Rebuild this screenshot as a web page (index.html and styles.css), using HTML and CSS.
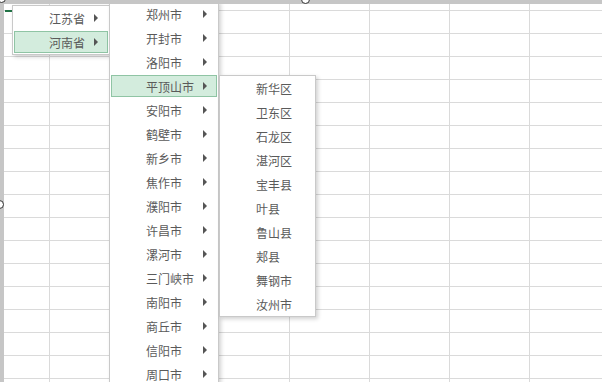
FILE: index.html
```html
<!DOCTYPE html>
<html lang="zh">
<head>
  <meta charset="UTF-8">
  <title>省市区联动菜单</title>
  <link rel="stylesheet" href="styles.css">
</head>
<body>
  <div class="sheet">
    <div class="topbar"></div>
    <div class="sidebar"></div>
    <div class="active-cell"></div>
    <span class="handle handle-tl"></span>
    <span class="handle handle-top"></span>
    <span class="handle handle-left"></span>

    <ul class="menu menu-province">
      <li class="item">江苏省<span class="arrow"></span></li>
      <li class="item active">河南省<span class="arrow"></span></li>
    </ul>

    <ul class="menu menu-city">
      <li class="item">郑州市<span class="arrow"></span></li>
      <li class="item">开封市<span class="arrow"></span></li>
      <li class="item">洛阳市<span class="arrow"></span></li>
      <li class="item active">平顶山市<span class="arrow"></span></li>
      <li class="item">安阳市<span class="arrow"></span></li>
      <li class="item">鹤壁市<span class="arrow"></span></li>
      <li class="item">新乡市<span class="arrow"></span></li>
      <li class="item">焦作市<span class="arrow"></span></li>
      <li class="item">濮阳市<span class="arrow"></span></li>
      <li class="item">许昌市<span class="arrow"></span></li>
      <li class="item">漯河市<span class="arrow"></span></li>
      <li class="item">三门峡市<span class="arrow"></span></li>
      <li class="item">南阳市<span class="arrow"></span></li>
      <li class="item">商丘市<span class="arrow"></span></li>
      <li class="item">信阳市<span class="arrow"></span></li>
      <li class="item">周口市<span class="arrow"></span></li>
    </ul>

    <ul class="menu menu-district">
      <li class="item">新华区</li>
      <li class="item">卫东区</li>
      <li class="item">石龙区</li>
      <li class="item">湛河区</li>
      <li class="item">宝丰县</li>
      <li class="item">叶县</li>
      <li class="item">鲁山县</li>
      <li class="item">郏县</li>
      <li class="item">舞钢市</li>
      <li class="item">汝州市</li>
    </ul>
  </div>
</body>
</html>
```

FILE: styles.css
```css
body {
  margin: 0;
  font-family: "Noto Sans CJK SC", "Noto Sans", sans-serif;
  font-size: 12px;
  color: #5a5a5a;
}

.sheet {
  position: relative;
  width: 602px;
  height: 382px;
  overflow: hidden;
  background-color: #fff;
  background-image:
    linear-gradient(to right, #dadada 1px, transparent 1px),
    linear-gradient(to bottom, #dadada 1px, transparent 1px);
  background-size: 80px 23px;
  background-position: 49px 10px;
}

.topbar {
  position: absolute;
  left: 0;
  top: 0;
  width: 100%;
  height: 4px;
  background: #c6c6c6;
  z-index: 5;
}

.sidebar {
  position: absolute;
  left: 0;
  top: 0;
  width: 4px;
  height: 100%;
  background: #c6c6c6;
  z-index: 5;
}

.active-cell {
  position: absolute;
  left: 5px;
  top: 10px;
  width: 8px;
  height: 2px;
  background: #217346;
}

.handle {
  position: absolute;
  width: 7px;
  height: 7px;
  border: 1px solid #333;
  border-radius: 50%;
  background: #fff;
  z-index: 6;
}

.handle-tl { left: -3px; top: -6px; }
.handle-top { left: 301px; top: -5px; }
.handle-left { left: -5px; top: 200px; }

.menu {
  position: absolute;
  display: flex;
  flex-direction: column;
  margin: 0;
  padding: 0;
  list-style: none;
  background: #fff;
  border: 1px solid #c9c9c9;
  box-sizing: border-box;
  box-shadow: 2px 2px 4px rgba(0,0,0,0.18);
}

.menu-province {
  left: 12px;
  top: 5px;
  width: 98px;
}

.menu-city {
  left: 109px;
  top: 1px;
  width: 110px;
  z-index: 1;
}

.menu-district {
  left: 219px;
  top: 75px;
  width: 97px;
  z-index: 2;
}

.item {
  display: flex;
  align-items: center;
  flex-shrink: 0;
  height: 22px;
  margin: 1px;
  padding: 0 9px 0 34px;
  box-sizing: border-box;
  border: 1px solid transparent;
  white-space: nowrap;
}

.item.active {
  background: #d3ecdd;
  border-color: #8fc4a4;
}

.arrow {
  margin-left: auto;
  width: 0;
  height: 0;
  border-top: 4px solid transparent;
  border-bottom: 4px solid transparent;
  border-left: 4px solid #555;
}
```
